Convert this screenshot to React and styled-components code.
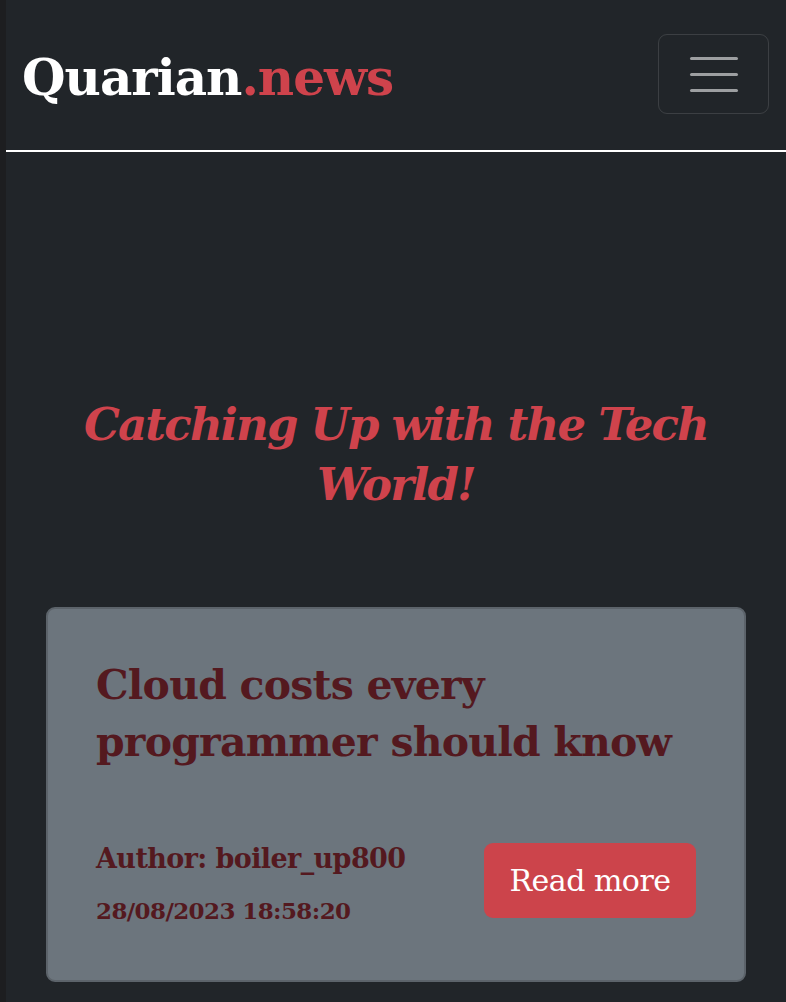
import React from "react";
import styled, { createGlobalStyle } from "styled-components";

const Global = createGlobalStyle`
  html, body { margin: 0; padding: 0; background: #1d1e20; }
  body { font-family: "DejaVu Serif", "Liberation Serif", serif; }
  * { box-sizing: border-box; }
`;

const Page = styled.div`
  min-height: 1002px;
  margin-left: 6px;
  background: #212529;
  display: flex;
  flex-direction: column;
`;

const NavBar = styled.nav`
  display: flex;
  align-items: center;
  justify-content: space-between;
  height: 152px;
  padding: 0 17px 0 16px;
  border-bottom: 2px solid #ffffff;
`;

const Brand = styled.a`
  font-family: "DejaVu Serif", serif;
  font-weight: 700;
  font-size: 50px;
  letter-spacing: -1px;
  color: #ffffff;
  text-decoration: none;
  margin-top: 4px;
`;

const BrandAccent = styled.span`
  color: #cf434c;
`;

const Toggler = styled.button`
  width: 111px;
  height: 80px;
  margin-top: -2px;
  border: 1.5px solid rgba(255, 255, 255, 0.12);
  border-radius: 9px;
  background: transparent;
  display: flex;
  flex-direction: column;
  align-items: center;
  justify-content: center;
  gap: 13px;
  padding: 0;
`;

const TogglerLine = styled.span`
  display: block;
  width: 48px;
  height: 3px;
  border-radius: 2px;
  background: #9d9fa1;
`;

const Main = styled.main`
  display: flex;
  flex-direction: column;
  align-items: center;
  padding: 243px 40px 0;
`;

const Headline = styled.h1`
  margin: 0;
  font-family: "DejaVu Serif", serif;
  font-style: italic;
  font-weight: 700;
  font-size: 45px;
  line-height: 60px;
  letter-spacing: -1.8px;
  color: #cf434c;
  text-align: center;
  max-width: 680px;
`;

const Card = styled.article`
  margin-top: 92px;
  width: 100%;
  background: #6c757d;
  border: 2px solid #5c636a;
  border-radius: 9px;
  padding: 48px 48px 56px 48px;
  color: #54191f;
`;

const CardTitle = styled.h2`
  margin: 0;
  font-family: "DejaVu Serif", serif;
  font-weight: 700;
  font-size: 41px;
  line-height: 57px;
  letter-spacing: -0.8px;
`;

const CardFooter = styled.div`
  margin-top: 72px;
  display: flex;
  align-items: flex-start;
  justify-content: space-between;
`;

const Meta = styled.div`
  display: flex;
  flex-direction: column;
  gap: 23px;
`;

const MetaLine = styled.span`
  font-family: "DejaVu Serif", serif;
  font-weight: 700;
  font-size: ${(p) => p.$size}px;
  line-height: ${(p) => p.$size + 4}px;
  letter-spacing: -0.6px;
`;

const ReadMore = styled.a`
  display: flex;
  align-items: center;
  justify-content: center;
  width: 212px;
  height: 75px;
  background: #cc444b;
  border-radius: 9px;
  color: #ffffff;
  font-family: "DejaVu Serif", serif;
  font-size: 30px;
  letter-spacing: -0.5px;
  text-decoration: none;
`;

export default function App() {
  return (
    <>
      <Global />
      <Page>
        <NavBar>
          <Brand href="#">
            Quarian<BrandAccent>.news</BrandAccent>
          </Brand>
          <Toggler aria-label="Toggle navigation">
            <TogglerLine />
            <TogglerLine />
            <TogglerLine />
          </Toggler>
        </NavBar>
        <Main>
          <Headline>Catching Up with the Tech World!</Headline>
          <Card>
            <CardTitle>Cloud costs every programmer should know</CardTitle>
            <CardFooter>
              <Meta>
                <MetaLine $size={27}>Author: boiler_up800</MetaLine>
                <MetaLine $size={23}>28/08/2023 18:58:20</MetaLine>
              </Meta>
              <ReadMore href="#">Read more</ReadMore>
            </CardFooter>
          </Card>
        </Main>
      </Page>
    </>
  );
}
